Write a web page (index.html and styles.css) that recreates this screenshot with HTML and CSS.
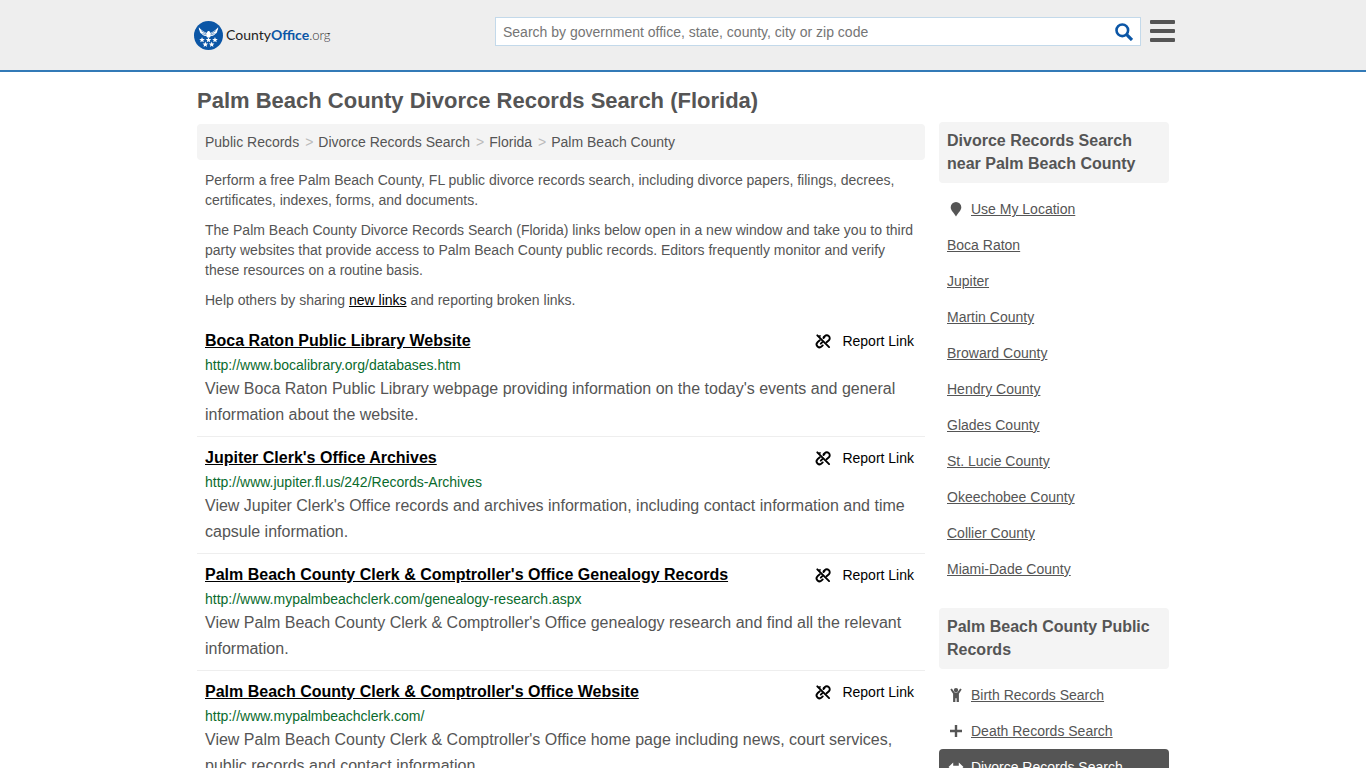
FILE: index.html
```html
<!DOCTYPE html>
<html lang="en">
<head>
<meta charset="utf-8">
<meta name="viewport" content="width=device-width, initial-scale=1">
<title>Palm Beach County Divorce Records Search (Florida)</title>
<link rel="stylesheet" href="styles.css">
</head>
<body>
<svg class="sprite" aria-hidden="true">
  <symbol id="unlink" viewBox="0 0 16 16"><g fill="none" stroke="currentColor" stroke-width="1.900" stroke-linecap="round"><path d="M2.300 2.300l11.800 11.800"/><path d="M8.700 4.200l1-1a2.900 2.900 0 0 1 4.200 4.100l-2.300 2"/><path d="M7.700 12.400l-1 1a2.900 2.900 0 0 1-4.200-4.100l2.300-2"/><path d="M9.500 4l-1 1M5.800 10.700l1.500-1.500" /></g><path d="M3.200 3.900a2 2 0 0 1 2.600-.7" fill="none" stroke="currentColor" stroke-width="1.500"/></symbol>
</svg>
<header class="topbar">
  <div class="container topbar-inner">
    <a class="logo" href="#" aria-label="CountyOffice.org">
      <svg class="logo-mark" viewBox="0 0 30 30" aria-hidden="true">
        <circle cx="15" cy="15" r="15" fill="#0b56a6"/>
        <g fill="#fff">
          <path d="M5 6.500c2.200 2.800 4.700 4.300 8 6l1-1.600c.9-.8 2-.5 2.600.4l.4 1.200c3.300-1.700 5.800-3.200 8-6 .1 2-.4 3.200-1.200 4.200l.4.200c-.6 1.400-1.600 2.200-2.900 2.800l.2.500c-1.300 1-2.900 1.300-4.200 1.400L16.500 17h-3l-.8-1.400c-1.300-.1-2.900-.4-4.200-1.400l.2-.5c-1.300-.6-2.300-1.400-2.900-2.800l.4-.2C5.400 9.700 4.900 8.500 5 6.500z"/>
          <path id="star" d="M8.300 16.600l.8 1.900 2.100.2-1.600 1.300.5 2.100-1.800-1.100-1.800 1.100.5-2.100-1.600-1.300 2.100-.2z"/>
          <use href="#star" x="6.700"/><use href="#star" x="13.400"/>
          <use href="#star" x="3.400" y="4.700"/><use href="#star" x="10" y="4.700"/>
        </g>
        <path d="M7.500 10l5.500 3.500M8.800 13l4 1.500M22.500 10L17 13.500M21.200 13l-4 1.500" stroke="#0b56a6" stroke-width=".6"/>
      </svg>
      <span class="logo-text">County<b>Office</b><span class="logo-tld">.org</span></span>
    </a>
    <form class="search" role="search">
      <input class="search-input" type="text" aria-label="Search" placeholder="Search by government office, state, county, city or zip code">
      <button class="search-button" type="button" aria-label="Search">
        <svg viewBox="0 0 18 18" width="18" height="18" fill="none" stroke="#0b56a6"><circle cx="7.300" cy="7.300" r="5.800" stroke-width="2.600"/><path d="M11.700 11.700l5.300 5.300" stroke-width="3.200"/></svg>
      </button>
    </form>
    <button class="menu" type="button" aria-label="Menu">
      <svg viewBox="0 0 25 22" width="25" height="22" fill="#555"><rect width="25" height="4" rx="1"/><rect y="9" width="25" height="4" rx="1"/><rect y="18" width="25" height="4" rx="1"/></svg>
    </button>
  </div>
</header>

<div class="container page">
  <h1 class="page-title">Palm Beach County Divorce Records Search (Florida)</h1>
  <div class="columns">
    <main class="main">
      <nav class="breadcrumb" aria-label="Breadcrumb">
        <a href="#">Public Records</a><span class="sep">&gt;</span><a href="#">Divorce Records Search</a><span class="sep">&gt;</span><a href="#">Florida</a><span class="sep">&gt;</span><a href="#">Palm Beach County</a>
      </nav>
      <div class="intro">
        <p>Perform a free Palm Beach County, FL public divorce records search, including divorce papers, filings, decrees, certificates, indexes, forms, and documents.</p>
        <p>The Palm Beach County Divorce Records Search (Florida) links below open in a new window and take you to third party websites that provide access to Palm Beach County public records. Editors frequently monitor and verify these resources on a routine basis.</p>
        <p>Help others by sharing <a class="new-links" href="#">new links</a> and reporting broken links.</p>
      </div>
      <article class="result">
        <div class="result-head"><a class="result-title" href="#">Boca Raton Public Library Website</a><a class="report" href="#"><svg class="report-icon" aria-hidden="true"><use href="#unlink"/></svg>Report Link</a></div>
        <div class="result-url">http://www.bocalibrary.org/databases.htm</div>
        <p class="result-text">View Boca Raton Public Library webpage providing information on the today's events and general information about the website.</p>
      </article>
      <article class="result">
        <div class="result-head"><a class="result-title" href="#">Jupiter Clerk's Office Archives</a><a class="report" href="#"><svg class="report-icon" aria-hidden="true"><use href="#unlink"/></svg>Report Link</a></div>
        <div class="result-url">http://www.jupiter.fl.us/242/Records-Archives</div>
        <p class="result-text">View Jupiter Clerk's Office records and archives information, including contact information and time capsule information.</p>
      </article>
      <article class="result">
        <div class="result-head"><a class="result-title" href="#">Palm Beach County Clerk &amp; Comptroller's Office Genealogy Records</a><a class="report" href="#"><svg class="report-icon" aria-hidden="true"><use href="#unlink"/></svg>Report Link</a></div>
        <div class="result-url">http://www.mypalmbeachclerk.com/genealogy-research.aspx</div>
        <p class="result-text">View Palm Beach County Clerk &amp; Comptroller's Office genealogy research and find all the relevant information.</p>
      </article>
      <article class="result">
        <div class="result-head"><a class="result-title" href="#">Palm Beach County Clerk &amp; Comptroller's Office Website</a><a class="report" href="#"><svg class="report-icon" aria-hidden="true"><use href="#unlink"/></svg>Report Link</a></div>
        <div class="result-url">http://www.mypalmbeachclerk.com/</div>
        <p class="result-text">View Palm Beach County Clerk &amp; Comptroller's Office home page including news, court services, public records and contact information.</p>
      </article>
    </main>
    <aside class="sidebar">
      <h2 class="side-title">Divorce Records Search near Palm Beach County</h2>
      <ul class="side-list">
        <li><a href="#"><svg class="side-icon" viewBox="0 0 18 16" aria-hidden="true"><path fill="currentColor" d="M9 1a5.300 5.300 0 0 1 5.300 5.300C14.300 9.500 11 12 9 15.500 7 12 3.700 9.500 3.700 6.300A5.300 5.300 0 0 1 9 1z"/></svg><span>Use My Location</span></a></li>
        <li><a href="#"><span>Boca Raton</span></a></li>
        <li><a href="#"><span>Jupiter</span></a></li>
        <li><a href="#"><span>Martin County</span></a></li>
        <li><a href="#"><span>Broward County</span></a></li>
        <li><a href="#"><span>Hendry County</span></a></li>
        <li><a href="#"><span>Glades County</span></a></li>
        <li><a href="#"><span>St. Lucie County</span></a></li>
        <li><a href="#"><span>Okeechobee County</span></a></li>
        <li><a href="#"><span>Collier County</span></a></li>
        <li><a href="#"><span>Miami-Dade County</span></a></li>
      </ul>
      <h2 class="side-title">Palm Beach County Public Records</h2>
      <ul class="side-list">
        <li><a href="#"><svg class="side-icon" viewBox="0 0 18 16" aria-hidden="true"><g fill="currentColor"><circle cx="9" cy="3.100" r="2.200"/><path d="M4.800 1.400L7.700 5.400h2.600l2.900-4 1.500 1.100L11.900 6.800v8.200H9.600v-3.800H8.400V15H6.100V6.800L3.300 2.500z"/></g></svg><span>Birth Records Search</span></a></li>
        <li><a href="#"><svg class="side-icon" viewBox="0 0 18 16" aria-hidden="true"><path fill="currentColor" d="M7.800 2h2.400v4.800H15v2.400h-4.800V14H7.800V9.200H3V6.800h4.800z"/></svg><span>Death Records Search</span></a></li>
        <li><a class="active" href="#" aria-current="page"><svg class="side-icon" viewBox="0 0 18 16" aria-hidden="true"><path fill="currentColor" d="M6.200 3.500v3.300h5.600V3.500L16.500 8l-4.700 4.500V9.200H6.200v3.300L1.500 8z"/></svg><span>Divorce Records Search</span></a></li>
      </ul>
    </aside>
  </div>
</div>
</body>
</html>
```
FILE: styles.css
```css
* { box-sizing: border-box; }
body {
  margin: 0;
  background: #fff;
  color: #555;
  font: 14px/20px "Liberation Sans", Arial, sans-serif;
}
h1, h2, p, ul { margin: 0; padding: 0; }
ul { list-style: none; }
a { color: inherit; }
button { padding: 0; border: 0; background: none; cursor: pointer; }
.sprite { display: none; }
.container { max-width: 988px; margin: 0 auto; padding: 0 8px; }

.topbar { background: #eee; border-bottom: 2px solid #337ab7; }
.topbar-inner { display: flex; align-items: flex-start; height: 70px; padding: 17px 2px 0 5px; }
.logo { display: flex; align-items: center; gap: 3px; width: 301px; height: 36px; color: #222; text-decoration: none; }
.logo-mark { width: 29px; height: 29px; }
.logo-text { font: 14px/20px Lato, sans-serif; }
.logo-text b { color: #0b56a6; }
.logo-tld { color: #333; font-size: 13px; font-weight: 300; }
.search { flex: 1; display: flex; height: 29px; background: #fff; border: 1px solid #c3d9ea; }
.search-input { flex: 1; min-width: 0; border: 0; padding: 0 7px; background: none; color: #555; font: inherit; outline: 0; }
.search-input::placeholder { color: #757575; opacity: 1; }
.search-button { width: 33px; display: flex; align-items: center; justify-content: center; }
.menu { display: flex; margin: 3px 0 0 9px; }

.page { overflow: hidden; }
.page-title { padding: 15px 0 7px; font-size: 22px; line-height: 28px; }
.columns { display: flex; align-items: flex-start; gap: 14px; }
.main { flex: 1; min-width: 0; padding-top: 2px; }
.breadcrumb { padding: 8px; background: #f4f4f4; border-radius: 4px; }
.breadcrumb a { text-decoration: none; }
.sep { padding: 0 5px 0 6px; color: #bbb; }
.intro { display: grid; gap: 10px; padding: 10px 8px; }
.new-links { color: #000; }
.result { padding: 8px; border-bottom: 1px solid #eee; }
.result-head { display: flex; justify-content: space-between; padding-right: 3px; line-height: 26px; }
.result-title { color: #000; font-size: 16px; font-weight: bold; }
.report { display: flex; align-items: center; gap: 11px; color: #000; text-decoration: none; white-space: nowrap; }
.report-icon { width: 16px; height: 16px; }
.result-url { color: #0a6b2d; line-height: 22px; }
.result-text { font-size: 16px; line-height: 26px; }

.sidebar { width: 230px; }
.side-title { padding: 7px 8px 8px; background: #f4f4f4; border-radius: 4px; font-size: 16px; line-height: 23px; }
.side-list { padding: 8px 0 21px; }
.side-list a { display: flex; align-items: center; gap: 6px; padding: 8px; border-radius: 4px; text-decoration: none; }
.side-list span { text-decoration: underline; }
.side-icon { width: 18px; height: 16px; }
.side-list .active { background: #555; color: #fff; }
.side-list .active span { text-decoration: none; }
```
